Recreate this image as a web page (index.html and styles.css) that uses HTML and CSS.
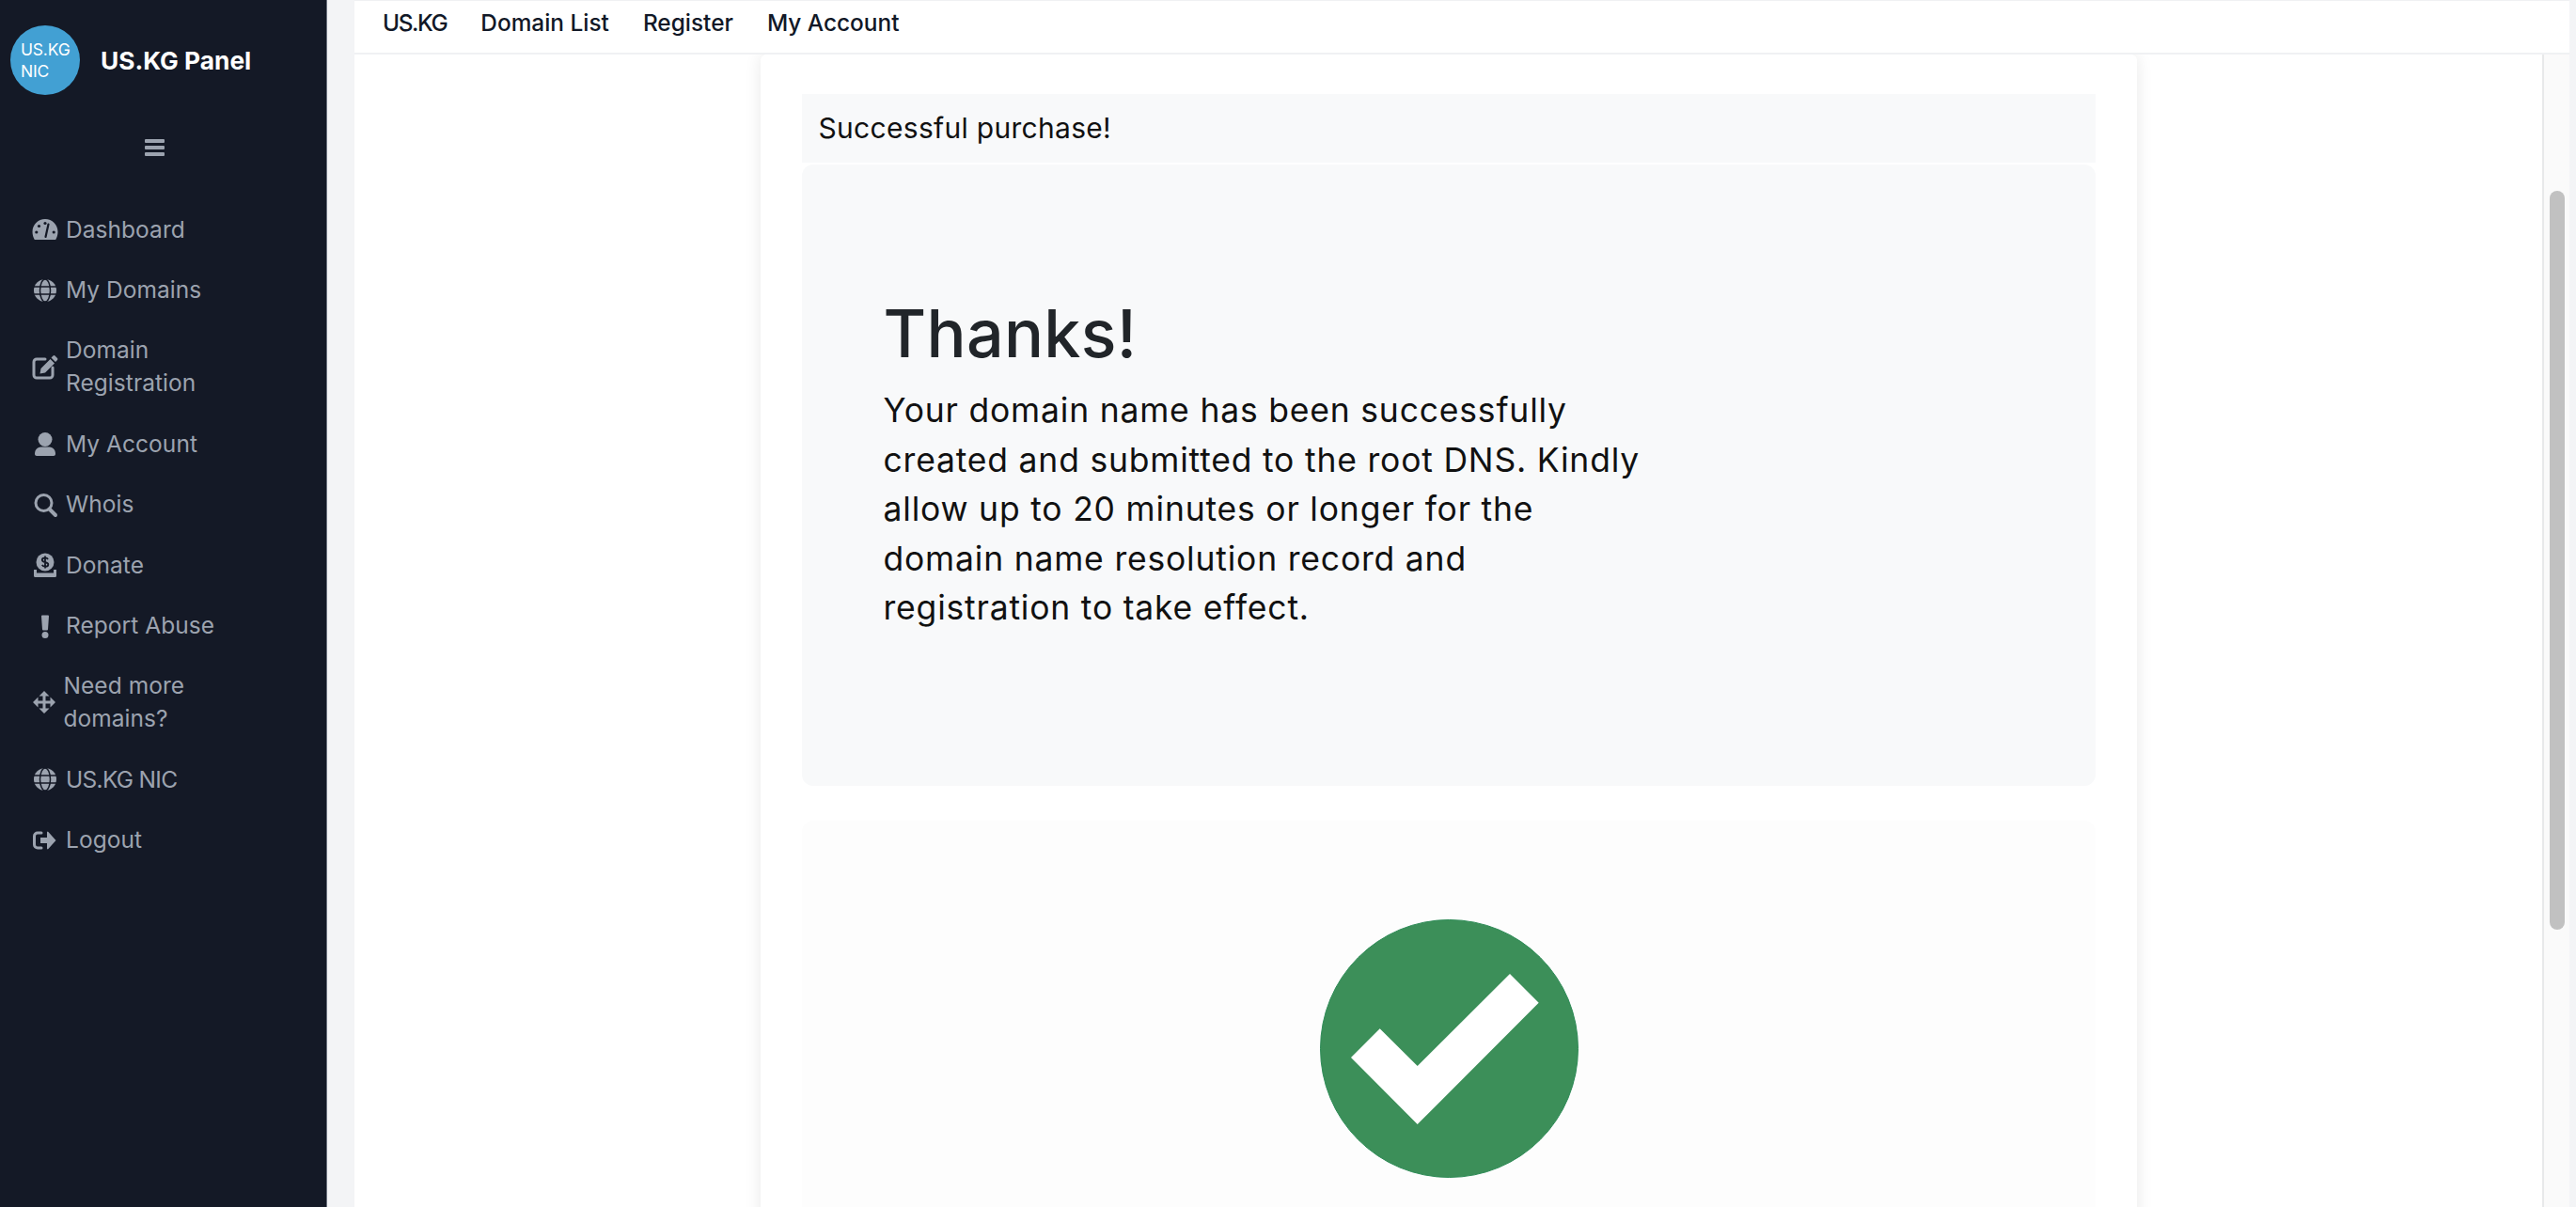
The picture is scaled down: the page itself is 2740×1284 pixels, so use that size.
FILE: index.html
```html
<!DOCTYPE html>
<html lang="en">
<head>
<meta charset="utf-8">
<title>US.KG Panel</title>
<link rel="stylesheet" href="styles.css">
</head>
<body>
<div class="app">
  <aside class="sidebar">
    <div class="brand">
      <div class="logo"><span>US.KG<br>NIC</span></div>
      <div class="brand-name">US.KG Panel</div>
    </div>
    <div class="burger"><i></i><i></i><i></i></div>
    <nav class="side-nav">
      <a class="side-item"><svg class="ico" viewBox="0 0 28 28"><path d="M14 3C6.5 3 .5 9 .5 16.5c0 3 .8 6 2.3 8.5h22.4c1.500-2.500 2.300-5.500 2.300-8.500C27.500 9 21.500 3 14 3z"/><g class="cut"><circle cx="14" cy="7.500" r="1.600"/><circle cx="7.500" cy="10.500" r="1.600"/><circle cx="4.800" cy="17" r="1.600"/><circle cx="23.200" cy="17" r="1.600"/><path class="cut-line" d="M14.500 22 17.500 8.500"/></g></svg><span>Dashboard</span></a>
      <a class="side-item"><svg class="ico" viewBox="0 0 28 28"><circle cx="14" cy="14" r="12"/><g class="cut-stroke"><ellipse cx="14" cy="14" rx="5.500" ry="12"/><path d="M2 10h24M2 18h24"/></g></svg><span>My Domains</span></a>
      <a class="side-item tall"><svg class="ico" viewBox="0 0 28 28"><path class="outline" d="M14 6H5a3 3 0 0 0-3 3v14a3 3 0 0 0 3 3h14a3 3 0 0 0 3-3v-8"/><path d="M24.500 2.500l2.500 2.500a1.500 1.500 0 0 1 0 2L25 9l-4.500-4.500 2-2a1.500 1.500 0 0 1 2 0zM19.500 6l4.500 4.500L14 20.500l-5.500 1 1-5.500z"/></svg><span class="wrap">Domain Registration</span></a>
      <a class="side-item"><svg class="ico" viewBox="0 0 28 28"><circle cx="14" cy="9.500" r="7.500"/><path d="M3 25c0-6 4-7.500 8-7.500h6c4 0 8 1.500 8 7.500 0 1.200-1 2-2 2H5c-1 0-2-.8-2-2z"/></svg><span>My Account</span></a>
      <a class="side-item"><svg class="ico" viewBox="0 0 28 28"><circle class="outline" cx="12.500" cy="12" r="8.500"/><path class="outline thick" d="M18.500 18.500 25 25"/></svg><span>Whois</span></a>
      <a class="side-item"><svg class="ico" viewBox="0 0 28 28"><circle cx="14" cy="11" r="9.500"/><path class="cut-thin" d="M17 8c-.6-1.200-1.600-1.700-3-1.700-2 0-3.200 1-3.200 2.400 0 3.300 6.500 1.600 6.500 4.700 0 1.400-1.300 2.300-3.300 2.300-1.500 0-2.600-.6-3.200-1.800M14 4.500v13"/><path d="M2 19h3v3.500h18V19h3v6.500a1.500 1.500 0 0 1-1.500 1.500h-21A1.500 1.500 0 0 1 2 25.500z"/></svg><span>Donate</span></a>
      <a class="side-item"><svg class="ico" viewBox="0 0 28 28"><path d="M11 2.500h6a1 1 0 0 1 1 1l-1 14a1 1 0 0 1-1 1h-4a1 1 0 0 1-1-1l-1-14a1 1 0 0 1 1-1z"/><circle cx="14" cy="23.500" r="3.500"/></svg><span>Report Abuse</span></a>
      <a class="side-item tall"><svg class="ico ico-move" viewBox="0 0 26 28"><path class="outline" d="M13 5v18M4 14h18"/><path d="M13 2l5.500 5.500h-11zM13 26l5.500-5.500h-11zM1 14l5.500-5.500v11zM25 14l-5.500-5.500v11z"/></svg><span class="wrap">Need more domains?</span></a>
      <a class="side-item"><svg class="ico" viewBox="0 0 28 28"><circle cx="14" cy="14" r="12"/><g class="cut-stroke"><ellipse cx="14" cy="14" rx="5.500" ry="12"/><path d="M2 10h24M2 18h24"/></g></svg><span class="tight">US.KG NIC</span></a>
      <a class="side-item"><svg class="ico" viewBox="0 0 28 28"><path class="outline" d="M10 6H6a3.500 3.500 0 0 0-3.500 3.500v9A3.500 3.500 0 0 0 6 22h4"/><path d="M9 11h7V5.500a.8.800 0 0 1 1.400-.6L25.500 14l-8.100 9.100a.8.800 0 0 1-1.400-.6V17H9z"/></svg><span>Logout</span></a>
    </nav>
  </aside>
  <div class="main">
    <header class="topbar">
      <a class="tight-top">US.KG</a><a>Domain List</a><a>Register</a><a>My Account</a>
    </header>
    <div class="body-row">
      <div class="content">
        <section class="card">
          <div class="card-head">Successful purchase!</div>
          <div class="hero">
            <h1>Thanks!</h1>
            <p>Your domain name has been successfully<br>created and submitted to the root DNS. Kindly<br>allow up to 20 minutes or longer for the<br>domain name resolution record and<br>registration to take effect.</p>
          </div>
          <div class="result">
            <svg class="check" viewBox="0 0 275 275"><circle class="check-disc" cx="137.500" cy="137.500" r="137"/><path class="check-mark" d="M33 147 63.700 116.300 103.700 156 202 58 232.700 88.700 103.700 218z"/></svg>
          </div>
        </section>
      </div>
      <div class="scrollbar"><div class="thumb"></div></div>
    </div>
  </div>
</div>
</body>
</html>
```
FILE: styles.css
```css
* { box-sizing: border-box; }
html, body { margin: 0; height: 100%; overflow: hidden; }
body { font-family: Inter, "Noto Sans", "Liberation Sans", sans-serif; color: #212529; background: #f3f4f6; }
.app { display: flex; height: 1284px; overflow: hidden; }

.sidebar { width: 348px; flex: none; background: #141926; border-right: 1px solid #6b7280; padding-top: 27px; color: #9ca3af; }
.brand { display: flex; align-items: center; gap: 22px; padding-left: 11px; }
.logo { width: 74px; height: 74px; border-radius: 50%; background: #42a0d3; color: #fff; font-size: 17.500px; line-height: 23px; display: flex; align-items: center; padding-left: 11px; letter-spacing: -.2px; }
.brand-name { color: #fff; font-size: 26.300px; font-weight: 700; }
.burger { width: 21px; margin: 47px 0 0 154px; display: flex; flex-direction: column; gap: 3px; }
.burger i { display: block; height: 4px; background: #9ca3af; border-radius: 1px; }
.side-nav { margin-top: 46px; display: flex; flex-direction: column; }
.side-item { display: flex; align-items: center; height: 64.400px; padding-left: 34px; font-size: 24.500px; line-height: 35px; letter-spacing: .05px; color: #9ca3af; }
.side-item.tall { height: 99.400px; }
.wrap { max-width: 190px; }
.tight { letter-spacing: -.7px; }
.ico { width: 28px; height: 28px; flex: none; margin-right: 8px; fill: #9ca3af; }
.ico-move { width: 26px; margin-right: 7.500px; }
.outline { fill: none; stroke: #9ca3af; stroke-width: 3; stroke-linecap: round; }
.outline.thick { stroke-width: 4; }
.cut { fill: #141926; }
.cut-line { fill: none; stroke: #141926; stroke-width: 2.200; stroke-linecap: round; }
.cut-stroke { fill: none; stroke: #141926; stroke-width: 1.500; }
.cut-thin { fill: none; stroke: #141926; stroke-width: 1.800; }

.main { flex: 1; min-width: 0; margin: 0 7px 0 29px; display: flex; flex-direction: column; }
.topbar { height: 58px; flex: none; background: #fff; border-top: 1px solid #f0f1f3; border-bottom: 2px solid #f0f1f3; padding: 4px 0 0 30px; display: flex; gap: 36px; align-items: flex-start; font-size: 24.400px; line-height: 38px; font-weight: 500; color: #111827; }
.tight-top { letter-spacing: -1.400px; }
.body-row { flex: 1; min-height: 0; display: flex; }
.content { flex: 1; min-width: 0; background: #fff; overflow: hidden; }
.card { width: 1464px; margin: 0 auto; height: 1300px; padding: 42px 44px 0; background: #fff; border-radius: 6px; box-shadow: 0 0 18px rgba(0, 0, 0, .09); }
.card-head { height: 73px; margin-bottom: 2px; padding: 0 18px 2px; display: flex; align-items: center; background: #f8f9fa; font-size: 30px; letter-spacing: .3px; color: #111; }
.hero { height: 661px; padding: 138px 87px 0; background: #f8f9fa; border-radius: 12px; }
.hero h1 { margin: 0 0 14px; font-size: 70px; line-height: 84px; font-weight: 500; color: #212529; letter-spacing: .3px; }
.hero p { margin: 0; font-size: 35.500px; line-height: 52.500px; letter-spacing: .8px; color: #111; }
.result { margin-top: 37px; height: 500px; padding: 105px 0 0 1px; background: #fdfdfd; border-radius: 12px; display: flex; justify-content: center; align-items: flex-start; }
.check { width: 275px; height: 275px; }
.check-disc { fill: #3c8f59; stroke: #2e8b57; stroke-width: 1; }
.check-mark { fill: #fff; }

.scrollbar { width: 29px; flex: none; background: #fafafa; border-left: 2px solid #e8e9ea; padding: 145px 0 0 6px; }
.thumb { width: 16px; height: 786px; border-radius: 8px; background: #c1c1c1; }
```
